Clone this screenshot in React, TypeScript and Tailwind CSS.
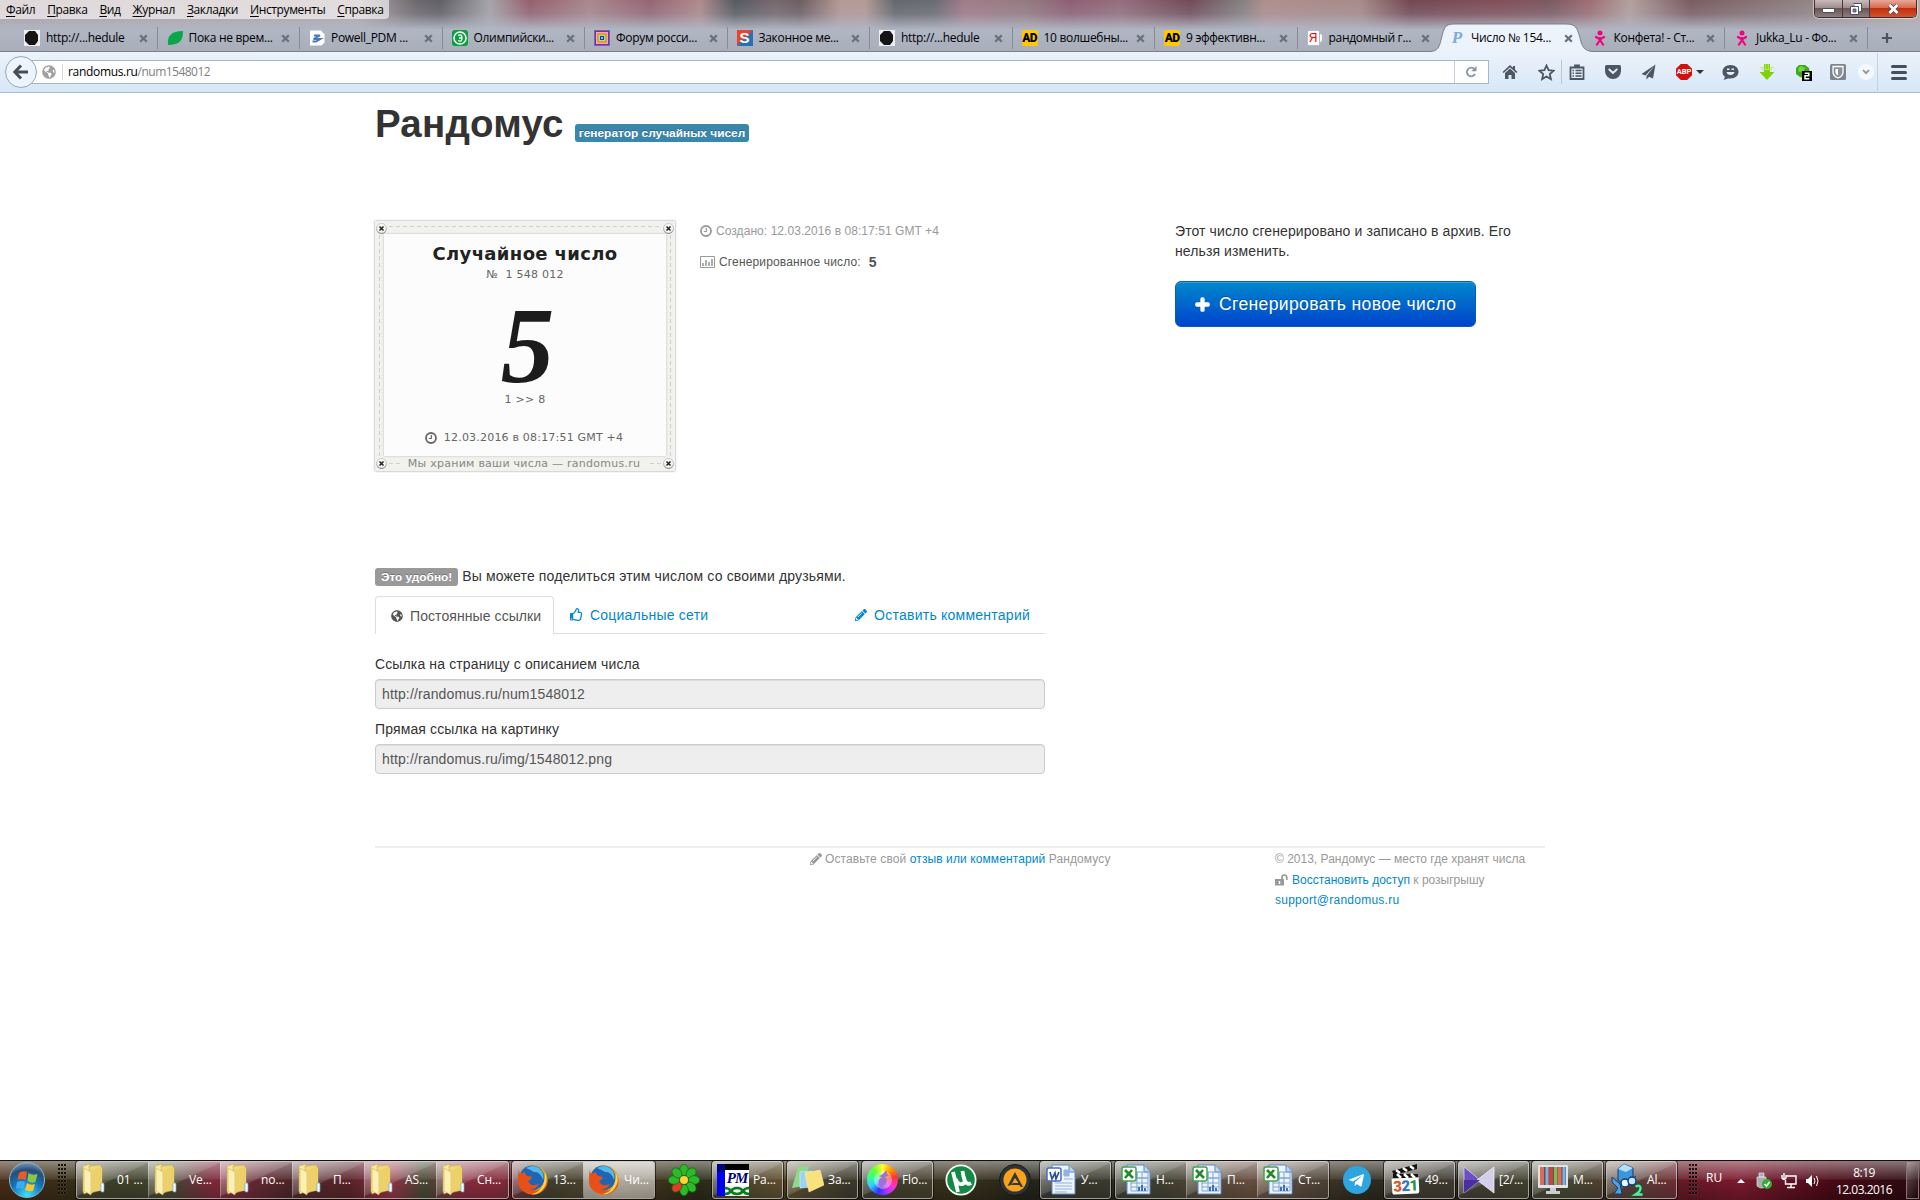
import type { ReactNode } from "react";
import { FaGlobeAmericas, FaPencilAlt, FaPlus, FaRegThumbsUp, FaTelegramPlane } from "react-icons/fa";

type IconName = "ball" | "leaf" | "page" | "coin" | "squares" | "s" | "ad" | "ya" | "p" | "girl";

const tabs: { title: string; icon: IconName; active?: boolean }[] = [
  { title: "http://...hedule", icon: "ball" },
  { title: "Пока не врем...", icon: "leaf" },
  { title: "Powell_PDM ...", icon: "page" },
  { title: "Олимпийски...", icon: "coin" },
  { title: "Форум росси...", icon: "squares" },
  { title: "Законное ме...", icon: "s" },
  { title: "http://...hedule", icon: "ball" },
  { title: "10 волшебны...", icon: "ad" },
  { title: "9 эффективн...", icon: "ad" },
  { title: "рандомный г...", icon: "ya" },
  { title: "Число № 154...", icon: "p", active: true },
  { title: "Конфета! - Ст...", icon: "girl" },
  { title: "Jukka_Lu - Фо...", icon: "girl" },
];

function Favicon({ name }: { name: IconName }) {
  if (name === "ad") {
    return <span className="h-4 w-4 shrink-0 rounded-[2px] bg-[#ffc800] text-center font-['Roboto'] text-[12px] leading-[17px] font-black tracking-[-0.8px] text-black">AD</span>;
  }
  if (name === "s") {
    return <span className="h-4 w-4 shrink-0 bg-[linear-gradient(135deg,#e8462a_40%,#2272b8_60%)] text-center font-['Liberation_Sans'] text-[15px] leading-4 font-bold text-white">S</span>;
  }
  if (name === "p") {
    return <span className="h-4 w-4 shrink-0 text-center font-['Liberation_Serif'] text-[17px] leading-4 font-bold text-[#7fabdc] italic">P</span>;
  }
  if (name === "ya") {
    return (
      <span className="flex h-4 w-4 shrink-0">
        <span className="h-4 w-[13px] rounded-[2px] border border-[#b9b9bd] bg-white text-center font-['Liberation_Sans'] text-[12px] leading-[14px] text-[#f00000]">Я</span>
        <span className="mt-1 h-2 w-[2px] rounded-r bg-white" />
      </span>
    );
  }
  return (
    <svg width="16" height="16" viewBox="0 0 16 16" className="shrink-0">
      {name === "ball" && (
        <>
          <rect width="16" height="16" fill="#eee" />
          <path d="M5 1h6l3 4v6l-3 4H5l-4-4V5z" fill="#151515" />
        </>
      )}
      {name === "leaf" && <path d="M1 15C0 6 4 1 16 1c0 9-3 14-15 14z" fill="#0ba54a" />}
      {name === "page" && (
        <>
          <path d="M1 .5h11l3.5 4v8l-3 3H1z" fill="#fff" />
          <path d="M5 5.5h6L4.500 9h7L7 11.500H3.500" fill="none" stroke="#4a78c0" strokeWidth="1.8" />
        </>
      )}
      {name === "coin" && (
        <>
          <rect width="16" height="16" rx="3" fill="#0ba03e" />
          <circle cx="8" cy="8" r="6" fill="none" stroke="#fff" strokeWidth="1.6" />
          <path d="M6 5.5q4-2 4 2.5t-4 2.5M7 8h3" fill="none" stroke="#fff" strokeWidth="1.3" />
        </>
      )}
      {name === "squares" && (
        <>
          <rect width="16" height="16" fill="#1e86e8" />
          <rect x="1.5" y="1.5" width="13" height="13" fill="#ffa6a0" stroke="#d80a68" />
          <rect x="4" y="4" width="8" height="8" fill="#b5dc7a" stroke="#d08010" />
          <rect x="6.5" y="6.5" width="3" height="3" fill="#6cf" stroke="#1236c8" />
        </>
      )}
      {name === "girl" && (
        <g fill="none" stroke="#f0067c" strokeLinecap="round">
          <circle cx="8" cy="3" r="2.5" fill="#f0067c" stroke="none" />
          <path d="M4 7l4 2.5L12 7M8 10l-3 4.500M8 10l3 4.500M8 8v3" strokeWidth="2.2" />
        </g>
      )}
    </svg>
  );
}

function CloseMark() {
  return (
    <svg width="9" height="9" viewBox="0 0 9 9" className="shrink-0">
      <path d="M1.2 1.2l6.6 6.6M7.8 1.2L1.2 7.8" stroke="#68727f" strokeWidth="2.3" />
    </svg>
  );
}

function ClockIcon() {
  return (
    <svg width="12" height="12" viewBox="0 0 12 12" fill="none" stroke="currentColor" className="shrink-0">
      <circle cx="6" cy="6" r="5" strokeWidth="1.8" />
      <path d="M6.300 3v3.500H3.800" strokeWidth="1.2" />
    </svg>
  );
}

function TitleBar() {
  const menu = ["Файл", "Правка", "Вид", "Журнал", "Закладки", "Инструменты", "Справка"];
  return (
    <div className="flex h-[26px] items-start justify-between">
      <div className="flex h-[19px] items-center gap-[12px] rounded-br-[4px] bg-white/60 pr-[6px] pl-[6px] text-[12px] tracking-[-0.38px] text-black">
        {menu.map((m) => (
          <span key={m}>
            <span className="underline underline-offset-2">{m[0]}</span>
            {m.slice(1)}
          </span>
        ))}
      </div>
      <div className="mr-[3px] flex h-[18px] overflow-hidden rounded-b-[5px] border border-t-0 border-[#3d3033] shadow-[0_0_1px_1px_#ffffff80]">
        <div className="flex w-[28px] items-center justify-center border-r border-[#4a3a3c] bg-[linear-gradient(#c9bcbc,#a08e8e_45%,#6b5555_50%,#8e7c7c)]">
          <span className="mt-1 h-[5px] w-[13px] rounded-[1px] border border-[#4b4f60] bg-white" />
        </div>
        <div className="flex w-[27px] items-center justify-center border-r border-[#4a3a3c] bg-[linear-gradient(#c9bcbc,#a08e8e_45%,#6b5555_50%,#8e7c7c)]">
          <svg width="12" height="12" viewBox="0 0 12 12">
            <path d="M3.5.5h8v8h-2M.5 3.5h8v8h-8z" fill="#fff" stroke="#4b4f60" />
            <path d="M3 6h3v3H3z" fill="#8e7c7c" stroke="#4b4f60" strokeWidth=".8" />
          </svg>
        </div>
        <div className="flex w-[46px] items-center justify-center bg-[linear-gradient(#e8a897,#d66c50_45%,#c22e0c_50%,#d2532c)]">
          <svg width="13" height="12" viewBox="0 0 13 12">
            <path d="M2.5 2l8 8M10.5 2l-8 8" stroke="#4b4f60" strokeWidth="4.4" />
            <path d="M2.5 2l8 8M10.5 2l-8 8" stroke="#fff" strokeWidth="2.7" />
          </svg>
        </div>
      </div>
    </div>
  );
}

function TabStrip() {
  return (
    <div className="flex h-[26px] border-b border-[#7b7f8a] pl-[15px] text-[12px] text-black">
      {tabs.map((t, i) => {
        const noSep = t.active || tabs[i + 1]?.active;
        return (
          <div key={i} className="relative flex h-[26px] w-[142.5px] shrink-0 items-center pr-[10px] pb-[2px] pl-[9px]">
            {t.active && (
              <svg width="164" height="29" viewBox="0 0 164 29" className="absolute top-[-3px] left-[-10px]">
                <path d="M0 28.5C8 28 9 25 11.5 15C14 5 15 1 24 1H136C146 1 147 5 149.5 13C152 24 154 28 163 28.5V29H0z" fill="#edf3fb" />
                <path d="M0 28.5C8 28 9 25 11.5 15C14 5 15 1 24 1H136C146 1 147 5 149.5 13C152 24 154 28 163 28.5" fill="none" stroke="#7b7f8a" />
              </svg>
            )}
            <span className="relative flex w-full items-center">
              <Favicon name={t.icon} />
              <span className="ml-[6px] flex-1 tracking-[-0.3px] whitespace-nowrap">{t.title}</span>
              <CloseMark />
            </span>
            {!noSep && <span className="absolute top-[1px] right-0 h-[22px] w-px bg-[#858b98]" />}
          </div>
        );
      })}
      <svg width="12" height="12" viewBox="0 0 12 12" className="mt-[6px] ml-[13px]">
        <path d="M6 1v10M1 6h10" stroke="#4d5560" strokeWidth="2.2" />
      </svg>
    </div>
  );
}

function Tool({ w, children }: { w: string; children: ReactNode }) {
  return <span className={`flex h-6 shrink-0 items-center justify-center ${w}`}>{children}</span>;
}

function NavBar() {
  return (
    <div className="flex h-[41px] items-center border-b border-[#a8bdd2] bg-[linear-gradient(#ebf2fb,#d8e7f6)] pl-[5px]">
      <div className="z-10 flex h-8 w-8 shrink-0 items-center justify-center rounded-full border border-[#93a7bd] bg-[#edf4fb]">
        <svg width="16" height="16" viewBox="0 0 16 16">
          <path d="M8 1.5L1.8 8 8 14.5M2.5 8h12.5" fill="none" stroke="#454d59" strokeWidth="3" />
        </svg>
      </div>
      <div className="ml-[-6px] flex h-6 w-[1458px] shrink-0 items-center border border-[#a5b9ce] bg-white pl-[10px] text-[12px]">
        <FaGlobeAmericas size={14} color="#a0a0a0" />
        <span className="ml-[6px] h-4 w-px bg-[#d5d5d5]" />
        <span className="ml-[5px] flex-1 tracking-[-0.52px] text-[#808080]">
          <span className="tracking-[-0.32px] text-black">randomus.ru</span>/num1548012
        </span>
        <span className="mr-[10px] h-full w-px bg-[#c4d0dc]" />
        <svg width="12" height="12" viewBox="0 0 12 12" className="mr-[11px]">
          <path d="M9.5 3.2A4.3 4.3 0 1 0 10 8" fill="none" stroke="#8796a6" strokeWidth="1.8" />
          <path d="M11.5 0v5.2H6.3z" fill="#8796a6" />
        </svg>
      </div>
      <Tool w="w-[42px]">
        <svg width="16" height="16" viewBox="0 0 16 16" fill="#4d5763">
          <path d="M8 1L.5 8l1.2 1L8 3.2 14.3 9l1.200-1L13 5.500V2h-2v1.800z" />
          <path d="M8 4.500L3 9v6h3.500v-4h3v4H13V9z" />
        </svg>
      </Tool>
      <Tool w="w-[30px]">
        <svg width="17" height="17" viewBox="0 0 17 17">
          <path d="M8.5 1.5l2.100 4.700 5 .5-3.800 3.400 1.100 5-4.400-2.600-4.400 2.600 1.100-5L1.400 6.700l5-.5z" fill="none" stroke="#4d5763" strokeWidth="1.8" />
        </svg>
      </Tool>
      <span className="h-6 w-px shrink-0 bg-[#b7c7d8]" />
      <Tool w="w-[30px]">
        <svg width="16" height="16" viewBox="0 0 16 16" fill="none" stroke="#4d5763" strokeWidth="1.8">
          <path d="M1.5 3.500h13v11.500h-13zM6 1.500h4v2H6z" />
          <path d="M3.5 6.500h1.500M6.500 6.500h6M3.500 9.200h1.500M6.500 9.200h6M3.500 12h1.500M6.500 12h6" strokeWidth="1.400" />
        </svg>
      </Tool>
      <Tool w="w-[41px]">
        <svg width="16" height="14" viewBox="0 0 16 14">
          <path d="M1.5 0h13Q16 0 16 1.500V6a8 8 0 0 1-16 0V1.500Q0 0 1.500 0z" fill="#4d5763" />
          <path d="M4.3 4.500L8 8l3.700-3.500" fill="none" stroke="#e6eef8" strokeWidth="1.900" strokeLinecap="round" />
        </svg>
      </Tool>
      <Tool w="w-[30px]">
        <svg width="15" height="16" viewBox="0 0 15 16">
          <path d="M14.5.5L.5 10l4 1.500zM14.5.5L5.500 12v3.500l2.500-2.700 4 1.700z" fill="#4d5763" />
        </svg>
      </Tool>
      <Tool w="w-[49px]">
        <span className="ml-[5px] flex h-4 w-4 items-center justify-center bg-[#d40f10] font-['Roboto'] text-[7.5px] font-bold text-white [clip-path:polygon(30%_0,70%_0,100%_30%,100%_70%,70%_100%,30%_100%,0_70%,0_30%)]">ABP</span>
        <span className="ml-[4px] border-x-[4px] border-t-[4px] border-x-transparent border-t-[#333]" />
      </Tool>
      <Tool w="w-[37px]">
        <svg width="17" height="15" viewBox="0 0 17 15">
          <path d="M8.5 0c5 0 8 3 8 6.800s-3 6.700-8 6.700H6l-4.500 1.500L3 12C1 10.500.5 8.700.5 6.800.5 3 3.500 0 8.500 0z" fill="#4d5763" />
          <path d="M4.5 7h8c-.5 4-7.500 4-8 0zM5 3.500h2.500V5H5zM9.500 3.500H12V5H9.500z" fill="#e6eef8" />
        </svg>
      </Tool>
      <Tool w="w-[36px]">
        <svg width="16" height="16" viewBox="0 0 16 16">
          <path d="M5 0h6v8h4.500L8 16 .5 8H5z" fill="#82d108" />
          <path d="M1.500 3.500h2v2h9v-2h2M6.700 0v5M9.300 0v5" fill="none" stroke="#b8e860" strokeWidth="1" />
        </svg>
      </Tool>
      <Tool w="w-[36px]">
        <svg width="17" height="17" viewBox="0 0 17 17">
          <path d="M1 4l3-3h6l4 3 1 6-4 4-6-1-4-3z" fill="#3fa81c" />
          <path d="M3 4l3-2 4 2-1 3-5 1z" fill="#75d63f" />
          <rect x="7" y="7" width="10" height="10" fill="#000" />
          <path d="M9.700 9.200h4.100v2.500H10v3.100h4.300" fill="none" stroke="#fff" strokeWidth="1.500" />
        </svg>
      </Tool>
      <Tool w="w-[34px]">
        <svg width="16" height="16" viewBox="0 0 16 16">
          <rect width="16" height="16" rx="1.500" fill="#7c858f" />
          <path d="M3 2.500h10V8c0 3-2 5-5 6-3-1-5-3-5-6z" fill="#8a929b" stroke="#fff" strokeWidth="1.300" />
          <path d="M5.5 5H8v6.500C6.300 10.500 5.500 9.500 5.500 8z" fill="#fff" />
        </svg>
      </Tool>
      <span className="ml-[3px] flex h-4 w-4 shrink-0 items-center justify-center rounded-full bg-[#f5f9fd]">
        <svg width="8" height="6" viewBox="0 0 8 6">
          <path d="M1 1l3 3.200L7 1" fill="none" stroke="#8c959e" strokeWidth="1.800" />
        </svg>
      </span>
      <span className="ml-[3px] h-[38px] w-px shrink-0 bg-[#c3d1df]" />
      <span className="ml-[13px] flex flex-col gap-[3px]">
        <span className="h-[3px] w-4 rounded bg-[#454f5b]" />
        <span className="h-[3px] w-4 rounded bg-[#454f5b]" />
        <span className="h-[3px] w-4 rounded bg-[#454f5b]" />
      </span>
    </div>
  );
}

function Rivet({ className }: { className: string }) {
  return (
    <svg width="11" height="11" viewBox="0 0 11 11" className={`absolute ${className}`}>
      <circle cx="5.5" cy="6" r="5" fill="#777" />
      <circle cx="5.5" cy="5.2" r="4.9" fill="#f4f4f2" stroke="#b4b4b2" strokeWidth=".6" />
      <path d="M3.5 3.5l4 4M7.5 3.5l-4 4" stroke="#222" strokeWidth="1.5" />
    </svg>
  );
}

function NumberCard() {
  return (
    <div className="relative h-[250px] w-[300px] shrink-0 bg-[#f1f1ed] px-[9px] pt-[13px] font-['DejaVu_Sans',sans-serif] text-[#666] shadow-[0_0_2px_#888]">
      <svg width="300" height="250" className="absolute top-0 left-0" fill="none" stroke="#cfcfcb" strokeDasharray="4 3">
        <path d="M14 5.5h272M4.5 14v222M295.5 14v222M14 242.5h14M275 242.5h11" />
      </svg>
      <div className="relative flex h-[222px] flex-col items-center bg-[#fcfcfc] shadow-[0_0_2px_#bbb]">
        <div className="mt-[8px] text-[18px] leading-[23px] font-bold tracking-[0.36px] text-[#222]">Случайное число</div>
        <div className="mt-[2px] text-[11px] leading-4 tracking-[0.25px] whitespace-pre">№  1 548 012</div>
        <div className="mt-[21px] ml-[5px] h-[83px] font-['Liberation_Serif'] text-[107px] leading-[84px] font-bold text-[#1c1c1c] italic">5</div>
        <div className="mt-[5px] text-[11px] leading-4 tracking-[0.3px]">1 &gt;&gt; 8</div>
        <div className="mt-[22px] mr-[2px] flex items-center gap-[7px] text-[11px] leading-4 tracking-[0.2px]">
          <ClockIcon />
          12.03.2016 в 08:17:51 GMT +4
        </div>
      </div>
      <div className="relative mt-[1px] mr-[2px] text-center text-[11px] leading-[13px] tracking-[0.25px] text-[#888]">Мы храним ваши числа — randomus.ru</div>
      <Rivet className="top-[2px] left-[1px]" />
      <Rivet className="top-[2px] right-[1px]" />
      <Rivet className="bottom-[2px] left-[1px]" />
      <Rivet className="right-[1px] bottom-[2px]" />
    </div>
  );
}

function LinkField({ label, value }: { label: string; value: string }) {
  return (
    <label className="mb-[10px] block">
      <span className="mb-[5px] block leading-5 tracking-[0.13px]">{label}</span>
      <input
        readOnly
        value={value}
        className="block h-[30px] w-full rounded-[4px] border border-[#ccc] bg-[#eee] px-[6px] text-[14px] tracking-[0.13px] text-[#555] shadow-[inset_0_1px_1px_rgba(0,0,0,0.075)]"
      />
    </label>
  );
}

function Page() {
  return (
    <main className="mx-auto h-[1067px] w-[1170px] font-['Liberation_Sans',Arial,sans-serif] text-[14px] leading-5 text-[#333]">
      <div className="flex h-[128px] items-baseline pt-[11px]">
        <h1 className="text-[38.5px] leading-10 font-bold tracking-[0.2px]">Рандомус</h1>
        <span className="ml-[11px] rounded-[3px] bg-[#3a87ad] px-1 py-[2px] text-[11.844px] leading-[14px] font-bold tracking-[0.04px] whitespace-nowrap text-white [text-shadow:0_-1px_0_rgba(0,0,0,0.25)]">
          генератор случайных чисел
        </span>
      </div>
      <div className="flex h-[345px]">
        <NumberCard />
        <div className="ml-[25px] w-[475px] text-[12px]">
          <p className="flex items-center gap-1 tracking-[0.06px] text-[#999]">
            <ClockIcon />
            Создано: 12.03.2016 в 08:17:51 GMT +4
          </p>
          <p className="mt-[11px] flex items-center tracking-[0.15px] text-[#555]">
            <svg width="15" height="12" viewBox="0 0 15 12" className="mr-1">
              <path d="M.5.5h14v11H.5z" fill="none" stroke="#999" />
              <path d="M3 7v3M6 4v6M9 6v4M12 3v7" stroke="#999" strokeWidth="1.6" />
            </svg>
            Сгенерированное число:
            <b className="ml-[8px] text-[14px]">5</b>
          </p>
        </div>
        <div className="w-[350px]">
          <p className="tracking-[0.1px]">Этот число сгенерировано и записано в архив. Его нельзя изменить.</p>
          <button className="mt-5 flex h-[46px] w-[301px] items-center rounded-[6px] border border-[#0a5cb0] bg-[linear-gradient(#0088cc,#0044cc)] pl-[19px] text-[17.5px] tracking-[0.38px] whitespace-nowrap text-white shadow-[inset_0_1px_0_rgba(255,255,255,0.2)] [text-shadow:0_-1px_0_rgba(0,0,0,0.25)]">
            <FaPlus size={15} className="mr-[9px] stroke-white stroke-[50]" />
            Сгенерировать новое число
          </button>
        </div>
      </div>
      <section className="h-[279px] w-[670px]">
        <div className="flex items-center gap-1 tracking-[0.15px]">
          <span className="mt-[2px] rounded-[3px] bg-[#999] px-[6px] py-[2px] text-[11.844px] leading-[14px] font-bold tracking-normal text-white [text-shadow:0_-1px_0_rgba(0,0,0,0.25)]">
            Это удобно!
          </span>
          Вы можете поделиться этим числом со своими друзьями.
        </div>
        <div className="mt-[10px] flex h-[38px] border-b border-[#ddd] text-[#0088cc]">
          <div className="flex h-[38px] w-[179px] items-center gap-[7px] rounded-t-[4px] border border-b-0 border-[#ddd] bg-white pl-[15px] tracking-[0.08px] text-[#555]">
            <FaGlobeAmericas size={12} />
            Постоянные ссылки
          </div>
          <div className="ml-[16px] flex items-center gap-[7px] tracking-[0.22px]">
            <FaRegThumbsUp size={13} />
            Социальные сети
          </div>
          <div className="mr-[15px] ml-auto flex items-center gap-[7px] tracking-[0.24px]">
            <FaPencilAlt size={12} />
            Оставить комментарий
          </div>
        </div>
        <div className="mt-5">
          <LinkField label="Ссылка на страницу с описанием числа" value="http://randomus.ru/num1548012" />
          <LinkField label="Прямая ссылка на картинку" value="http://randomus.ru/img/1548012.png" />
        </div>
      </section>
      <footer className="mt-[1px] flex items-start border-t-2 border-[#eee] pt-[1px] text-[12px] text-[#999]">
        <p className="ml-[435px] flex w-[465px] items-center tracking-[0.1px]">
          <FaPencilAlt size={12} className="mr-[3px]" />
          <span>
            Оставьте свой <a className="text-[#0088cc]">отзыв или комментарий</a> Рандомусу
          </span>
        </p>
        <div>
          <p>© 2013, Рандомус — место где хранят числа</p>
          <p className="mt-[1px] flex items-center">
            <svg width="13" height="12" viewBox="0 0 13 12" className="mr-1">
              <path d="M0 5h9v6.5H0z" fill="#999" />
              <path d="M7 5.5V3.5q0-2.500 2.300-2.500t2.500 2.500V6" fill="none" stroke="#999" strokeWidth="1.7" />
              <path d="M4.5 7v3" stroke="#fff" strokeWidth="1.5" />
            </svg>
            <span>
              <a className="text-[#0088cc]">Восстановить доступ</a> к розыгрышу
            </span>
          </p>
          <a className="block tracking-[0.25px] text-[#0088cc]">support@randomus.ru</a>
        </div>
      </footer>
    </main>
  );
}

function Svg32({ children }: { children: ReactNode }) {
  return (
    <svg width="32" height="34" viewBox="0 0 32 34" className="shrink-0">
      {children}
    </svg>
  );
}

function Folder() {
  return (
    <Svg32>
      <path d="M2 3l7-2v27l-6 3-1-3z" fill="#f7e9a0" stroke="#c9ab4a" strokeWidth=".6" />
      <path d="M8 3l11-1 2 3v22l-12 3z" fill="#f0d878" stroke="#c9ab4a" strokeWidth=".6" />
      <path d="M3 5l7 4v23l-7-4z" fill="#fbf0b4" stroke="#cfb258" strokeWidth=".6" />
      <path d="M10 8l8-4 3 1v23l-7-1-4 4z" fill="#ecd06a" />
      <rect x="20" y="20" width="3" height="9" rx="1" fill="#f7fbff" stroke="#6aa6d8" strokeWidth=".7" />
    </Svg32>
  );
}

function Firefox() {
  return (
    <Svg32>
      <circle cx="16" cy="17" r="14.5" fill="#f0a21a" />
      <circle cx="15" cy="15" r="12.5" fill="#1e66b4" />
      <path d="M9 5q7-4 13 0 6 5 4 12-3-9-9-8-3-2-8-4z" fill="#58b6e8" />
      <path d="M2 6q0 4 1 5l5-2q0 3 3 4l4 1q-1 3-4 4 2 5 7 4l4-1q-3 6-9 5 8 4 14-3 3-4 2-11 4 9-2 15-6 6-14 4Q0 28 1 16q0-6 1-10z" fill="#e8501a" />
      <path d="M28 10q4 8-1 15-5 7-12 6 8-2 11-9 2-5 2-12z" fill="#fbd847" />
    </Svg32>
  );
}

function PmIcon() {
  return (
    <span className="flex h-8 w-8 shrink-0 bg-white">
      <span className="h-8 w-2 border-t-8 border-[#000088] bg-[#0000f0]" />
      <span className="flex w-6 flex-col">
        <span className="h-[6px] bg-black" />
        <span className="h-4 text-center font-['Liberation_Serif'] text-[15px] leading-[17px] font-bold tracking-[-1px] text-[#000080] italic">PM</span>
        <svg width="24" height="10" viewBox="0 0 24 10">
          <rect width="24" height="10" fill="#eee" />
          <path d="M0 2q4 0 6 3t6 3 6-3 6-3M0 8q4 0 6-3t6-3 6 3 6 3" fill="none" stroke="#087a20" strokeWidth="2.6" />
        </svg>
      </span>
    </span>
  );
}

function Notes() {
  return (
    <Svg32>
      <path d="M6 4l11-1-5 20-12 2z" fill="#8fda8a" />
      <path d="M8 9l12-1 1 16-13 1z" fill="#9ed2f4" stroke="#d7edfb" strokeWidth=".6" />
      <path d="M13 10l15-3 4 15-15 7z" fill="#f9e27c" stroke="#fff1ac" strokeWidth=".6" />
    </Svg32>
  );
}

function ColorWheel() {
  return (
    <span className="flex h-[31px] w-[31px] shrink-0 items-center justify-center rounded-full bg-[conic-gradient(#ff3,#f90,#f33,#f3c,#a3f,#33f,#3cf,#3f9,#6f3,#ff3)]">
      <svg width="22" height="24" viewBox="0 0 22 24">
        <circle cx="11" cy="12" r="9" fill="#ffffff60" />
        <path d="M14 2q1 4 3 6-2 0-4 1 3 3 1 6-3 5-7 1-2-4 3-7-2 0-3-1 5-2 7-6zM9 15q2 4 4 6-5-1-7-5" fill="#a06fd8" />
      </svg>
    </span>
  );
}

function WordDoc() {
  return (
    <Svg32>
      <path d="M7 2h17l6 7v22H7z" fill="#edf4fd" stroke="#5b88c8" />
      <path d="M24 2v7h6" fill="#bcd6f2" stroke="#5b88c8" />
      <path d="M19 7h5v6h-5zM19 16h9M10 20h17M10 23h17M10 26h17M10 29h12" fill="#8db3e2" stroke="#8db3e2" />
      <rect x="2" y="5" width="14" height="13" rx="2" fill="#fff" stroke="#4a6fc0" strokeWidth="1.5" />
      <path d="M5 9l2 7 3-6 1 6 3-7" fill="none" stroke="#2b50a8" strokeWidth="1.7" />
    </Svg32>
  );
}

function ExcelDoc() {
  return (
    <Svg32>
      <path d="M7 2h17l6 7v22H7z" fill="#edf4fd" stroke="#5b88c8" />
      <path d="M24 2v7h6" fill="#bcd6f2" stroke="#5b88c8" />
      <path d="M17 9h11v6H17zM11 20h17M11 15h17v13H11zM17 9v19M22 9v19M11 24h17" fill="none" stroke="#7fa3da" />
      <path d="M19 28v-4M22 28v-6M25 28v-3" stroke="#3f6fb8" strokeWidth="2" />
      <rect x="2" y="4" width="14" height="14" rx="2" fill="#fff" stroke="#45a04a" strokeWidth="1.5" />
      <path d="M5 7l8 8M12 7l-7 8" stroke="#1f8a28" strokeWidth="2.6" />
    </Svg32>
  );
}

function Clapper() {
  return (
    <span className="flex h-[34px] w-8 shrink-0 flex-col items-center">
      <svg width="30" height="15" viewBox="0 0 30 15">
        <path d="M2 8L27 1v5L4 12z" fill="#111" />
        <path d="M6 7l4 3M13 5l4 3M20 3l4 3" stroke="#fff" strokeWidth="2.5" />
        <path d="M3 11h25v4H3z" fill="#111" />
        <path d="M7 11l4 4M14 11l4 4M21 11l4 4" stroke="#fff" strokeWidth="2.5" />
      </svg>
      <span className="h-4 w-[27px] rotate-[-3deg] rounded-b-[2px] bg-white text-center font-['Roboto'] text-[15px] leading-4 font-black tracking-[-0.5px]">
        <span className="text-[#e0561c]">3</span>
        <span className="text-[#2a78c8]">2</span>
        <span className="text-[#28963c]">1</span>
      </span>
    </span>
  );
}

function Player() {
  return (
    <Svg32>
      <path d="M1 4l16 13L1 30z" fill="#6a50c4" stroke="#d9d0f6" strokeWidth=".8" />
      <path d="M31 4v26L14 17z" fill="#d3cfe8" stroke="#f1eefb" strokeWidth=".8" />
      <path d="M1 17h16L1 30z" fill="#4a2fa0" />
    </Svg32>
  );
}

function Monitor() {
  return (
    <Svg32>
      <rect x="1" y="2" width="30" height="23" rx="1" fill="#dfe3e6" />
      <path d="M3 4h26v18H3z" fill="#4b5a66" />
      <path d="M5 4v18M22.5 4v18" stroke="#e06a5a" strokeWidth="4" />
      <path d="M10 4v18M27 4v18" stroke="#7fb2e0" strokeWidth="3" />
      <path d="M14 4v18" stroke="#d53f35" strokeWidth="4" />
      <path d="M18.5 4v18" stroke="#76c04e" strokeWidth="3" />
      <path d="M13 25h6v3h4v3H9v-3h4z" fill="#c8ced2" />
    </Svg32>
  );
}

function Helper() {
  return (
    <Svg32>
      <path d="M7 6l6-5 9 4v13l-9 3-6-4z" fill="#3b96dc" stroke="#0d3f78" />
      <path d="M7 6l8 3 7-4-9-4z" fill="#b5defa" />
      <path d="M1 14l8 7 2 10H3l4-6-6-6zM19 17l6-4" fill="#4ba3e3" stroke="#0d3f78" />
      <circle cx="14" cy="20" r="4" fill="#e8f5ff" stroke="#0d3f78" strokeWidth="1.5" />
      <circle cx="21" cy="18" r="4" fill="#c5e5fb" stroke="#0d3f78" strokeWidth="1.5" />
      <path d="M24.500 23.500q5-2 5 1.500t-5 6.500h7" fill="none" stroke="#0c5a34" strokeWidth="4" />
      <path d="M24.500 23.500q5-2 5 1.500t-5 6.500h7" fill="none" stroke="#5fe8a0" strokeWidth="2.4" />
    </Svg32>
  );
}

function TaskGroup({ items, className }: { items: { icon: ReactNode; text: string; lit?: boolean }[]; className: string }) {
  return (
    <div className={`flex h-[38px] shrink-0 overflow-hidden rounded-[3px] border border-[#ffffff90] shadow-[0_0_0_1px_#00000090] ${className}`}>
      {items.map((it, i) => (
        <div
          key={i}
          className={`flex min-w-0 flex-1 items-center overflow-hidden border-white/25 pb-[1px] pl-[4px] text-[12px] whitespace-nowrap text-white not-last:border-r ${
            it.lit
              ? "bg-[linear-gradient(#ffffffb0,#ffffff70)]"
              : "bg-[linear-gradient(155deg,#ffffff8c,#ffffff38_48%,#ffffff14_50%,#ffffff10)]"
          }`}
        >
          {it.icon}
          <span className="ml-[4px] tracking-[-0.1px]">{it.text}</span>
        </div>
      ))}
    </div>
  );
}

function Grip() {
  return <span className="mt-[3px] h-[31px] w-[9px] shrink-0 bg-[radial-gradient(circle_at_1px_1px,#15100f_1px,#a08c8c30_1.5px,transparent_2px)] bg-[length:3px_4px]" />;
}

function Taskbar() {
  return (
    <div className="flex h-10 items-start overflow-hidden border-t border-[#111] bg-[linear-gradient(#ffffff70,#ffffff18_45%,#00000000_50%,#00000040),linear-gradient(90deg,#4a2d18,#2d3016_110px,#34351f_170px,#75182c_215px,#3d1418_290px,#4a1218_350px,#8a1f34_390px,#353a22_425px,#7a1a2c_460px,#7a1a2c_500px,#2c2c1c_540px,#4b3b1e_620px,#2d2b1a_700px,#50401e_780px,#2b2a1c_850px,#39331c_960px,#25241a_1030px,#303020_1160px,#5a4030_1250px,#2e2c20_1370px,#302a20_1450px,#353720_1560px,#4c2c24_1640px,#6a1826_1690px,#7a1a2e_1740px,#4a0a16_1830px,#300a10_1900px)]">
      <div className="mt-[1px] ml-[9px] flex h-[36px] w-[36px] shrink-0 items-center justify-center rounded-full border border-[#8ab8d8] bg-[radial-gradient(circle_at_50%_95%,#3fe0ff,#1273b4_45%,#274e78_70%,#a9c3d6)]">
        <svg width="23" height="23" viewBox="0 0 23 23">
          <path d="M3 4q4-3 8-1L9.5 11q-4-2-8 0z" fill="#ee5a24" />
          <path d="M12.5 4q4 3 9 1l-2 8q-4 2-8-1z" fill="#8cc63f" />
          <path d="M1 13q4-2 8 0l-1.5 7q-4-2-7.5 0z" fill="#3fa9f5" />
          <path d="M11 14q4 3 8 1l-2 7q-4 1-8-1z" fill="#fbc52c" />
        </svg>
      </div>
      <span className="w-[13px] shrink-0" />
      <Grip />
      <TaskGroup
        className="ml-[9px] w-[433px]"
        items={["01 ...", "Ve...", "no...", "П...", "AS...", "Сн..."].map((text) => ({ text, icon: <Folder /> }))}
      />
      <TaskGroup
        className="ml-[3px] w-[143px]"
        items={[
          { text: "13...", icon: <Firefox /> },
          { text: "Чи...", icon: <Firefox />, lit: true },
        ]}
      />
      <div className="mt-[3px] flex w-[57px] shrink-0 justify-center">
        <svg width="32" height="32" viewBox="-16 -16 32 32">
          {[0, 45, 90, 135, 180, 225, 270, 315].map((a) => (
            <ellipse key={a} cx="0" cy="-10" rx="4.3" ry="5.7" transform={`rotate(${a})`} fill={a === 225 ? "#e83a24" : "#2eb82a"} stroke="#0c6a10" strokeWidth=".7" />
          ))}
          <circle r="4" fill="#ffd633" />
        </svg>
      </div>
      <TaskGroup className="w-[71px]" items={[{ text: "Ра...", icon: <PmIcon /> }]} />
      <TaskGroup className="ml-[4px] w-[71px]" items={[{ text: "За...", icon: <Notes /> }]} />
      <TaskGroup className="ml-[4px] w-[71px]" items={[{ text: "Flo...", icon: <ColorWheel /> }]} />
      <div className="mt-[3px] flex w-[56px] shrink-0 justify-center">
        <svg width="32" height="32" viewBox="0 0 32 32">
          <circle cx="16" cy="16" r="15.5" fill="#fff" />
          <circle cx="16" cy="16" r="13.8" fill="#128a46" />
          <path d="M8 8l5 20M10.500 15q3 7 8 4.500 2-2 0-7L17.500 7M19 14q2 8 7 5" fill="none" stroke="#fff" strokeWidth="3.8" />
        </svg>
      </div>
      <div className="mt-[3px] flex w-[51px] shrink-0 justify-center">
        <svg width="32" height="32" viewBox="0 0 32 32">
          <circle cx="16" cy="16" r="15.5" fill="#2f3338" stroke="#16181a" />
          <circle cx="16" cy="16" r="11.5" fill="#f9a31a" />
          <path d="M16 8L8.5 22l3.500-1 4-7 3.500 5H14l-2 2h8l2 2h2z" fill="#33363a" />
        </svg>
      </div>
      <TaskGroup className="w-[71px]" items={[{ text: "У...", icon: <WordDoc /> }]} />
      <TaskGroup
        className="ml-[4px] w-[214px]"
        items={[
          { text: "Н...", icon: <ExcelDoc /> },
          { text: "П...", icon: <ExcelDoc /> },
          { text: "Ст...", icon: <ExcelDoc /> },
        ]}
      />
      <div className="mt-[5px] flex w-[55px] shrink-0 justify-center">
        <span className="flex h-7 w-7 items-center justify-center rounded-full bg-[#2ca5e0] text-white">
          <FaTelegramPlane size={17} />
        </span>
      </div>
      <TaskGroup className="w-[71px]" items={[{ text: "49...", icon: <Clapper /> }]} />
      <TaskGroup className="ml-[3px] w-[71px]" items={[{ text: "[2/...", icon: <Player /> }]} />
      <TaskGroup className="ml-[3px] w-[71px]" items={[{ text: "М...", icon: <Monitor /> }]} />
      <TaskGroup className="ml-[3px] w-[71px]" items={[{ text: "Al...", icon: <Helper /> }]} />
      <span className="w-[12px] shrink-0" />
      <Grip />
      <span className="mt-[8px] ml-[8px] w-[31px] shrink-0 text-[12px] leading-[18px] text-white">RU</span>
      <span className="mt-[18px] shrink-0 border-x-[4px] border-b-[4px] border-x-transparent border-b-white" />
      <svg width="65" height="18" viewBox="0 0 65 18" className="mt-[11px] ml-[11px] shrink-0">
        <path d="M3 1h5v4H3zM1 5h9v9q-4 4-9 0z" fill="#a9adb0" stroke="#e5e5e5" strokeWidth=".7" />
        <circle cx="11" cy="12" r="5" fill="#2fae35" />
        <path d="M8.5 12l2 2 3-4" fill="none" stroke="#fff" strokeWidth="1.5" />
        <path d="M30 4h10v8H29.5V8M35 12v3M31 15.5h8M28 1v6M26 3v3q2 3 4 0V3" fill="none" stroke="#fff" strokeWidth="1.4" />
        <path d="M50 7h2l4-4v12l-4-4h-2z" fill="#fff" />
        <path d="M58 6q2 3 0 6M60.5 4q3 5 0 10" fill="none" stroke="#fff" />
      </svg>
      <div className="mt-[3px] ml-[2px] w-[82px] shrink-0 text-center text-[12px] leading-[17px] tracking-[-0.5px] text-white">
        8:19
        <br />
        12.03.2016
      </div>
      <div className="mr-[1px] ml-auto h-[38px] w-[13px] shrink-0 border border-[#8a7078] bg-[linear-gradient(120deg,#ffffff50,#00000060)]" />
    </div>
  );
}

export default function App() {
  return (
    <div className="h-[1200px] w-[1920px] overflow-hidden bg-white font-['Open_Sans','Noto_Sans',sans-serif]">
      <header className="bg-[linear-gradient(#b0b0b838,#b0b2be60_14px,#b0b6c3_30px,#a8adb9_52px,transparent_52px),linear-gradient(90deg,#b09a9c,#b9a6a4_360px,#5b5558_415px,#4a484c_440px,#a4a1a4_490px,#8d4a58_530px,#a87c80_590px,#8d5060_650px,#b08080_700px,#3d4148_735px,#655458_775px,#5a4648_800px,#b5928c_840px,#b5948e_865px,#4f5258_895px,#57585e_935px,#9f6c7c_965px,#8d6c70_1025px,#844860_1070px,#8d5c6c_1120px,#602e3c_1190px,#77706f_1240px,#b08482_1265px,#a5807c_1360px,#602b35_1410px,#75343e_1500px,#6d4048_1550px,#9a5c60_1590px,#b39c98_1630px,#6b4548_1690px,#8a7876_1810px,#c0a8a0_1920px)]">
        <TitleBar />
        <TabStrip />
        <NavBar />
      </header>
      <Page />
      <Taskbar />
    </div>
  );
}
